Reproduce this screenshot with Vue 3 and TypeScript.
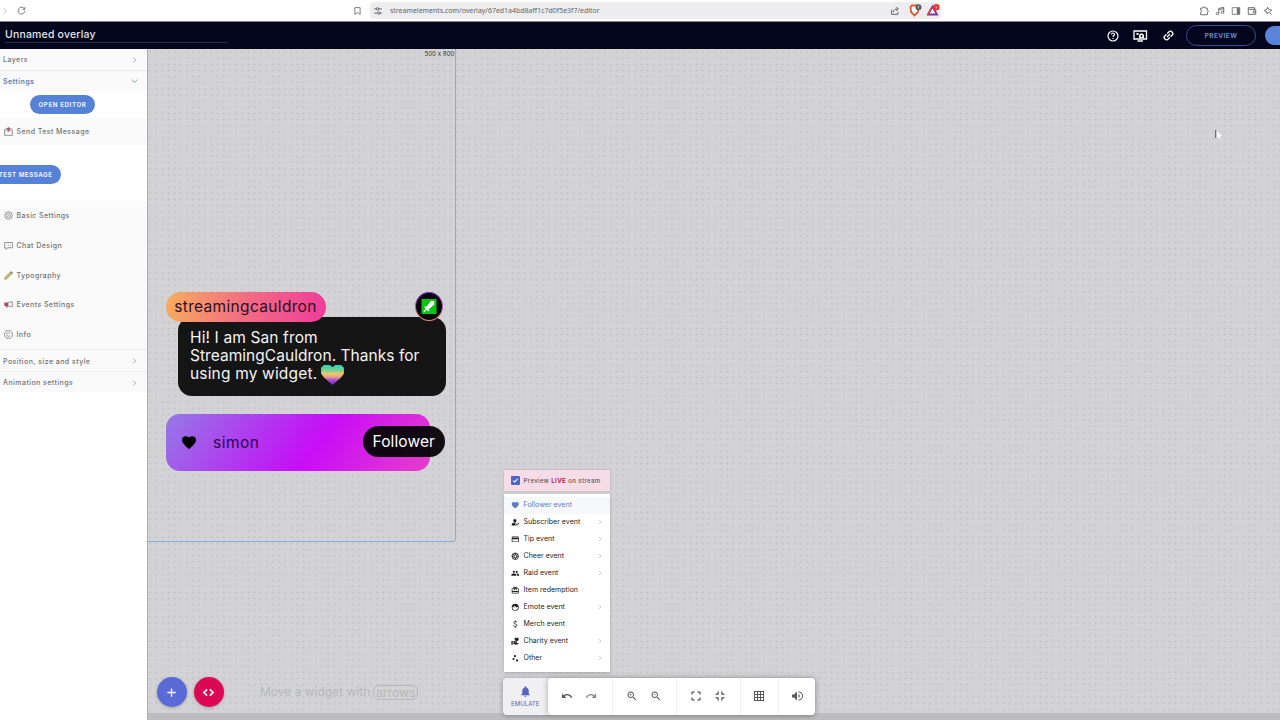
<script setup lang="ts">
import { h, type FunctionalComponent } from 'vue'

const glyphs: Record<string, string> = {
  heart: 'M12 21.4 10.6 20C5.4 15.4 2 12.300 2 8.500 2 5.400 4.400 3 7.500 3c1.700 0 3.400.8 4.500 2.100C13.100 3.800 14.800 3 16.500 3 19.600 3 22 5.400 22 8.500c0 3.800-3.400 6.900-8.600 11.500z',
  subscriber: 'M11 12a4.500 4.500 0 1 0 0-9 4.500 4.500 0 0 0 0 9zM2 21v-3c0-3 5-5 9-5 1 0 2 .1 3 .4L11 17l4 4zM17 21l-4-4 1.500-1.500L17 18l5-5 1.500 1.500z',
  card: 'M20 4H4a2 2 0 0 0-2 2v12a2 2 0 0 0 2 2h16a2 2 0 0 0 2-2V6a2 2 0 0 0-2-2zm0 14H4v-6h16zm0-10H4V6h16z',
  raid: 'M16 11a3 3 0 1 0 0-6 3 3 0 0 0 0 6zm-8 0a3 3 0 1 0 0-6 3 3 0 0 0 0 6zm0 2c-2.300 0-7 1.200-7 3.500V19h14v-2.500C15 14.200 10.300 13 8 13zm8 0-1 .1c1.200.8 2 2 2 3.400V19h6v-2.500c0-2.300-4.700-3.500-7-3.500z',
  gift: 'M20 6h-2.200A3 3 0 0 0 12 4a3 3 0 0 0-5.800 2H4a2 2 0 0 0-2 2v11a2 2 0 0 0 2 2h16a2 2 0 0 0 2-2V8a2 2 0 0 0-2-2zM9 4h1v2H8zm5 0h2v2h-2zm6 15H4v-2h16zm0-5H4V8h5l-2 3 2 1 3-4 3 4 2-1-2-3h5z',
  emote: 'M12 2a10 10 0 1 0 0 20 10 10 0 0 0 0-20zm0 18a8 8 0 0 1-8-8c3-.5 5-2 6-4 2 3 6 4 9.800 3.500A8 8 0 0 1 12 20zM9 11.800a1.300 1.300 0 1 0 0 2.600 1.300 1.300 0 0 0 0-2.600zm6 0a1.300 1.300 0 1 0 0 2.600 1.300 1.300 0 0 0 0-2.600z',
  charity: 'M1 11h4v11H1zM16 3.300C16.600 2.500 17.500 2 18.500 2 20.400 2 22 3.600 22 5.500c0 2.300-2.500 4.300-6 7.500-3.500-3.200-6-5.200-6-7.500C10 3.600 11.600 2 13.500 2c1 0 1.900.5 2.500 1.300zM20 17h-7l-2-.7.3-.9 1.700.6h3c.8 0 1.500-.7 1.500-1.500 0-.6-.4-1.100-.9-1.300L9 11H7v9l7 2 8-3c0-1.100-.9-2-2-2z',
  other: 'M7 11a3 3 0 1 0 0 6 3 3 0 0 0 0-6zM11 3a3 3 0 1 0 0 6 3 3 0 0 0 0-6zM17 15a3 3 0 1 0 0 6 3 3 0 0 0 0-6z',
  bell: 'M12 22a2 2 0 0 0 2-2h-4a2 2 0 0 0 2 2zm6-6v-5c0-3.100-1.600-5.600-4.500-6.300V4a1.500 1.500 0 0 0-3 0v.7C7.600 5.400 6 7.900 6 11v5l-2 2v1h16v-1z',
  undo: 'M12.500 8c-2.600 0-5 1-6.900 2.600L2 7v9h9l-3.600-3.600A8 8 0 0 1 20 16l2.400-.8A10.500 10.500 0 0 0 12.500 8z',
  redo: 'M18.400 10.600A10.500 10.500 0 0 0 1.600 15.200L4 16a8 8 0 0 1 12.600-3.600L13 16h9V7z',
  zoomIn: 'M15.500 14h-.8l-.3-.3A6.500 6.500 0 1 0 13.700 14.400l.3.300v.8l5 5 1.500-1.500zm-6 0a4.500 4.500 0 1 1 0-9 4.500 4.500 0 0 1 0 9zM12 10h-2v2H9v-2H7V9h2V7h1v2h2z',
  zoomOut: 'M15.500 14h-.8l-.3-.3A6.500 6.500 0 1 0 13.700 14.400l.3.300v.8l5 5 1.500-1.500zm-6 0a4.500 4.500 0 1 1 0-9 4.500 4.500 0 0 1 0 9zM7 9h5v1H7z',
  expand: 'M3 3h6v2.500H5.500V9H3zM15 3h6v6h-2.500V5.500H15zM3 15h2.500v3.500H9V21H3zM18.500 15H21v6h-6v-2.500h3.500z',
  shrink: 'M7 3h2.500v6.500H3V7h4zM14.500 3H17v4h4v2.500h-6.500zM3 14.500h6.500V21H7v-4H3zM14.500 14.500H21V17h-4v4h-2.500z',
  sound: 'M2 9v6h4l6 6V3L6 9zm13-1v8c1.500-.7 2.500-2.200 2.500-4S16.500 8.700 15 8zm0-5v2a7 7 0 0 1 0 14v2a9 9 0 0 0 0-18z',
  grid: 'M2 2h20v20H2zM4 4v4h4V4zm6 0v4h4V4zm6 0v4h4V4zM4 10v4h4v-4zm6 0v4h4v-4zm6 0v4h4v-4zM4 16v4h4v-4zm6 0v4h4v-4zm6 0v4h4v-4z',
  link: 'M3.900 12c0-1.700 1.400-3.100 3.100-3.100h4V6.500H7a5.500 5.500 0 0 0 0 11h4v-2.400H7A3.100 3.100 0 0 1 3.900 12zM8 13.200h8v-2.400H8zm9-6.700h-4v2.400h4a3.100 3.100 0 0 1 0 6.200h-4v2.400h4a5.500 5.500 0 0 0 0-11z',
}
const lines: Record<string, string> = {
  right: 'M8 4l8 8-8 8',
  down: 'M2 7l10 10L22 7',
  cheer: 'M12 3a9 9 0 1 0 0 18 9 9 0 0 0 0-18zM12 8a4 4 0 1 0 0 8 4 4 0 0 0 0-8zM12 2v6M12 16v6M2 12h6M16 12h6M5 5l4 4M15 15l4 4M19 5l-4 4M9 15l-4 4',
  dollar: 'M17 7c-1-3-9-3-9 1s9 3 9 7-8 4-10 1M12 1v4M12 19v4',
  plus: 'M12 1v22M1 12h22',
  code: 'M9 5l-7 7 7 7M15 5l7 7-7 7',
  check: 'M4 12l5 5L20 6',
  reload: 'M20 8A9 9 0 1 0 21 13M21 3v6h-6',
  bookmark: 'M5 3h14v18l-7-5-7 5z',
  tune: 'M3 7h5M14 7h7M3 17h7M17 17h4M11 4a3 3 0 1 0 0 6 3 3 0 0 0 0-6zM14 14a3 3 0 1 0 0 6 3 3 0 0 0 0-6z',
  share: 'M4 9v11h15v-6M8 15c0-6 4-8 11-8M15 2l5 5-5 5',
  puzzle: 'M4 5h5c0-4 6-4 6 0h5v5c3 0 3 5 0 5v6H4v-6c3 0 3-5 0-5z',
  music: 'M9 18V6l12-3v12M9 9l12-3M6 15a3 3 0 1 0 0 6 3 3 0 0 0 0-6zM18 12a3 3 0 1 0 0 6 3 3 0 0 0 0-6z',
  wallet: 'M3 8V4h15v4M3 8h18v12H3zM21 12h-6v4h6',
  leo: 'M11 3l3 5 7 2-5 4M11 3L9 8l-6 3 6 3 1 5 5-5M16 16l4 4',
  help: 'M12 2a10 10 0 1 0 0 20 10 10 0 0 0 0-20zM9 9c0-4 6-4 6 0 0 2-3 2-3 5M12 16v2',
  gear: 'M12 2a10 10 0 1 0 0 20 10 10 0 0 0 0-20zM12 7a5 5 0 1 0 0 10 5 5 0 0 0 0-10zM12 11v2',
  chat: 'M1 4h22v14H10l-5 4v-4H1zM6 11h2M11 11h2M16 11h2',
  copy: 'M12 1a11 11 0 1 0 0 22 11 11 0 0 0 0-22zM16 9c-3-4-9-2-9 3s6 7 9 3',
}
const Glyph: FunctionalComponent<{ name: string }> = (p) =>
  h('svg', { viewBox: '0 0 24 24', class: 'glyph' }, [
    glyphs[p.name]
      ? h('path', { d: glyphs[p.name], fill: 'currentColor', 'fill-rule': 'evenodd' })
      : h('path', { d: lines[p.name], fill: 'none', stroke: 'currentColor', 'stroke-width': p.name === 'plus' || p.name === 'code' || p.name === 'check' ? 3.6 : 2.4 }),
  ])
Glyph.props = ['name']

const groups = [
  { label: 'Basic Settings', icon: 'gear' },
  { label: 'Chat Design', icon: 'chat' },
  { label: 'Typography', icon: 'pencil' },
  { label: 'Events Settings', icon: 'horn' },
  { label: 'Info', icon: 'copy' },
]
const events = [
  { label: 'Follower event', icon: 'heart', more: false },
  { label: 'Subscriber event', icon: 'subscriber', more: true },
  { label: 'Tip event', icon: 'card', more: true },
  { label: 'Cheer event', icon: 'cheer', more: true },
  { label: 'Raid event', icon: 'raid', more: true },
  { label: 'Item redemption', icon: 'gift', more: false },
  { label: 'Emote event', icon: 'emote', more: true },
  { label: 'Merch event', icon: 'dollar', more: false },
  { label: 'Charity event', icon: 'charity', more: true },
  { label: 'Other', icon: 'other', more: true },
]
const tools = [['undo', 'redo'], ['zoomIn', 'zoomOut'], ['expand', 'shrink'], ['grid'], ['sound']]
</script>

<template>
  <div class="page">
    <div class="browser">
      <Glyph name="right" class="fwd" />
      <Glyph name="reload" class="reload" />
      <Glyph name="bookmark" class="bookmark" />
      <div class="address">
        <Glyph name="tune" />
        <span class="url">streamelements.com/overlay/67ed1a4bd8aff1c7d0f5e3f7/editor</span>
        <Glyph name="share" class="share" />
        <svg class="shield" viewBox="0 0 13 13">
          <path d="M1.500 3l1.500-1.500h5L9.500 3 9 8l-3.500 3.500L2 8z" fill="#fff" stroke="#dc5b35" stroke-width="1.800" />
          <circle cx="9.500" cy="3.200" r="3" fill="#5d5e69" /><path d="M9.500 2v2.400" stroke="#ddd" stroke-width=".8" />
        </svg>
        <svg class="bat" viewBox="0 0 13 13">
          <path d="M5.500 2.500L10 10.500H1z" fill="#fff" stroke="#7a3596" stroke-width="1.800" /><path d="M1 10.500L5 3" stroke="#d84655" stroke-width="1.800" />
          <circle cx="9.300" cy="3.300" r="3.200" fill="#e7362d" /><path d="M9.300 2v2.600" stroke="#fbb" stroke-width=".8" />
        </svg>
      </div>
      <div class="extensions">
        <Glyph name="puzzle" /><Glyph name="music" />
        <svg class="glyph" viewBox="0 0 24 24"><path d="M3 4h18v16H3z" fill="none" stroke="currentColor" stroke-width="2" /><path d="M14 4h7v16h-7z" fill="currentColor" /></svg>
        <Glyph name="wallet" /><Glyph name="leo" />
      </div>
    </div>

    <header class="topbar">
      <div class="title"><span>Unnamed overlay</span></div>
      <div class="actions">
        <Glyph name="help" class="help" />
        <svg class="monitor" viewBox="0 0 15 12"><path d="M1 1h12.500v8H1zM4.500 11h5.500" fill="none" stroke="#fff" stroke-width="1.300" /><path d="M3.500 3h2v2h-2zM6 5l1.500-1.500h2L11 5v3H6z" fill="#fff" /><circle cx="8.500" cy="6" r="1" fill="#03061c" /></svg>
        <Glyph name="link" class="link" />
        <button class="preview">PREVIEW</button>
        <div class="save"></div>
      </div>
    </header>

    <div class="body">
      <aside class="side">
        <div class="section"><span>Layers</span><Glyph name="right" /></div>
        <div class="section open"><span>Settings</span><Glyph name="down" /></div>
        <div class="editor"><button class="pill">OPEN EDITOR</button></div>
        <div class="group send">
          <svg class="emoji" viewBox="0 0 9 9"><path d="M.6 3h7.800v5.400H.6z" fill="#f8f5f5" stroke="#857f82" stroke-width=".8" /><path d="M.6 3l1.200-1.500h5.400l1.200 1.500" fill="none" stroke="#9a8f93" stroke-width=".6" /><path d="M4.500 0L6.800 2H5.500v2.500h-2V2H2.200z" fill="#ad5663" /></svg>
          <span>Send Test Message</span>
        </div>
        <div class="test"><button class="pill">TEST MESSAGE</button></div>
        <div v-for="g in groups" :key="g.label" class="group">
          <svg v-if="g.icon === 'pencil'" class="emoji" viewBox="0 0 9 9"><path d="M.5 8.500L1.200 6 6.300 1 8 2.700 3 7.700z" fill="#c8b86e" stroke="#8f895f" stroke-width=".5" /><path d="M6.300 1l.9-.8L9 1.900l-1 .8z" fill="#716d78" /></svg>
          <svg v-else-if="g.icon === 'horn'" class="emoji" viewBox="0 0 9 9"><path d="M4 2.800l4.300-1.300v5.300L4 6z" fill="#faf7f8" stroke="#8b7b80" stroke-width=".8" /><path d="M.3 2.500H4v3.600H3.600V7.500H2.200L1.800 6H.3z" fill="#a74e61" /></svg>
          <Glyph v-else :name="g.icon" class="emoji" />
          <span>{{ g.label }}</span>
        </div>
        <div class="section late"><span>Position, size and style</span><Glyph name="right" /></div>
        <div class="section late"><span>Animation settings</span><Glyph name="right" /></div>
      </aside>

      <main class="canvas">
        <div class="stage"><span>500 x 800</span></div>

        <div class="message">
          <p><span class="l1">Hi! I am San from</span><br><span class="l2">StreamingCauldron. Thanks for</span><br><span class="l3">using my widget.</span>
            <svg class="rainbow" viewBox="0 0 24 21"><defs><linearGradient id="rb" x1="0" y1="0" x2="0" y2="1"><stop offset=".05" stop-color="#35d3b4" /><stop offset=".27" stop-color="#79d292" /><stop offset=".45" stop-color="#f3c66a" /><stop offset=".6" stop-color="#ec9a87" /><stop offset=".75" stop-color="#a84fd0" /><stop offset="1" stop-color="#6a24c8" /></linearGradient></defs><path d="M3 0h6l3 2 3-2h6l3 3v6l-3 4-9 8-9-8-3-4V3z" fill="url(#rb)" /></svg>
          </p>
        </div>
        <div class="author"><span>streamingcauldron</span></div>
        <div class="badge"><svg viewBox="0 0 16 16"><path d="M0 0h16v16H0z" fill="#0ac414" /><path d="M13.500 2v4l-6 5 1 1-1 1-2-1.500L3 14l-1-1 2.500-2.500L3 8.500l1-1 1 1L10 2z" fill="#fff" /></svg></div>

        <div class="alert">
          <Glyph name="heart" /><span>simon</span>
        </div>
        <div class="follower"><span>Follower</span></div>

        <div class="fabs">
          <button class="fab add"><Glyph name="plus" /></button>
          <button class="fab dev"><Glyph name="code" /></button>
        </div>
        <div class="hint"><span class="words">Move a widget with</span><span class="key">arrows</span></div>

        <div class="live"><i><Glyph name="check" /></i><span>Preview <b>LIVE</b> on stream</span></div>
        <ul class="menu">
          <li v-for="(e, i) in events" :key="e.label" :class="{ active: i === 0 }">
            <Glyph :name="e.icon" /><span>{{ e.label }}</span><Glyph v-if="e.more" name="right" class="more" />
          </li>
        </ul>
        <div class="scrollbar"></div>
        <div class="dock">
          <div class="emulate"><Glyph name="bell" /><span>EMULATE</span></div>
          <div class="tools">
            <div v-for="(set, i) in tools" :key="i" :class="['set', 'set' + i]"><Glyph v-for="t in set" :key="t" :name="t" :class="t" /></div>
          </div>
        </div>
        <svg class="cursor" viewBox="0 0 7 11"><path d="M1 1v8l2-1.500L4.200 10l1.400-.8L4.500 7H7z" fill="#fff" /><path d="M.8 1v8" stroke="#333" stroke-width=".9" /></svg>
      </main>
    </div>
  </div>
</template>

<style>
body { margin: 0; overflow: hidden; }
</style>

<style scoped>
* { box-sizing: border-box; }
.page { width: 1280px; height: 720px; overflow: hidden; display: flex; flex-direction: column; font-family: Inter, "Liberation Sans", sans-serif; font-feature-settings: "calt" 0; background: #fff; }
.glyph { width: 10px; height: 10px; flex: none; display: block; }
span { white-space: nowrap; }
button { border: 0; padding: 0; font-family: inherit; }
.browser { height: 22px; flex: none; display: flex; align-items: center; color: #707070; background: #fff; border-bottom: 1px solid #85858c; }
.fwd { width: 8px; height: 8px; margin-left: 1px; color: #aaa; }
.reload { width: 9px; height: 9px; margin-left: 8px; }
.bookmark { width: 9px; height: 10px; margin-left: 327px; }
.address { width: 571px; height: 17px; margin-left: 8px; background: #ededf0; border-radius: 4px; display: flex; align-items: center; padding-left: 3px; color: #666; }
.url { font: 7px "Noto Sans", sans-serif; letter-spacing: -.02px; margin-left: 7px; width: 211px; }
.share { margin-left: 289px; }
.shield { width: 13px; height: 13px; margin-left: 9px; margin-top: -1px; }
.bat { width: 13px; height: 13px; margin-left: 5px; margin-top: -1px; }
.extensions { display: flex; gap: 6px; margin-left: auto; margin-right: 7px; }
.topbar { height: 27px; flex: none; background: #03061c; display: flex; justify-content: space-between; color: #fff; }
.title { width: 223px; height: 21px; margin-left: 5px; border-bottom: 1px solid #292e44; font-size: 10.500px; line-height: 25px; color: #e3e5ec; font-weight: 500; }
.title span { letter-spacing: .18px; }
.actions { display: flex; align-items: center; }
.help { width: 12px; height: 12px; }
.monitor { width: 15px; height: 12px; margin-left: 14px; }
.link { width: 13px; height: 13px; margin-left: 14px; transform: rotate(-45deg); }
.preview { width: 70px; height: 21px; margin-left: 11px; border: 1px solid #3c4f8b; border-radius: 11px; background: transparent; color: #6487d2; font-size: 6.500px; font-weight: 700; letter-spacing: .4px; }
.save { width: 15px; height: 19px; margin-left: 9px; background: #5884da; border-radius: 10px 0 0 10px; }
.body { flex: 1; display: flex; min-height: 0; }
.side { width: 147.500px; flex: none; background: #fff; border-right: 1px solid #aaaab0; overflow: hidden; font-size: 7px; color: #747474; font-weight: 500; }
.section { height: 21.500px; background: #fafafa; border-bottom: 1px solid #ececec; display: flex; align-items: center; justify-content: space-between; padding: 1px 9px 0 3px; }
.section span { letter-spacing: .45px; }
.section .glyph { width: 7px; height: 8px; color: #888; }
.section.open { color: #5c7eb6; border-bottom: 0; height: 20.500px; font-weight: 600; }
.section.open .glyph { color: #57769f; }
.section.late { border-top: 1px solid #f2f2f2; border-bottom: 0; }
.editor { height: 27px; padding: 4px 0 0 30px; }
.pill { display: block; height: 19px; border-radius: 10px; background: #5582d6; color: #e9f0ff; font-size: 6.200px; font-weight: 700; letter-spacing: .6px; white-space: nowrap; }
.editor .pill { width: 65px; }
.test { height: 56px; padding-top: 20px; }
.test .pill { width: 81px; margin-left: -20px; text-align: right; padding-right: 8.500px; letter-spacing: .5px; }
.group { height: 29.700px; background: #fafafa; display: flex; align-items: center; gap: 4px; padding-left: 3.500px; }
.send { height: 27px; }
.emoji { width: 9px; height: 9px; color: #888; flex: none; }
.group span { letter-spacing: .43px; }
.canvas { flex: 1; position: relative; overflow: hidden; background-color: #d3d3d5; background-image: radial-gradient(circle, #b7b7bf .55px, transparent 1px); background-size: 6.150px 6.150px; background-position: -1px 0; }
.stage { position: absolute; left: -4px; top: -4px; width: 312px; height: 497px; border: 1px solid #86aedb; border-radius: 0 0 3px 0; text-align: right; font-size: 6.200px; line-height: 16px; color: #333; }
.author { position: absolute; left: 18px; top: 242.500px; width: 160px; height: 30px; border-radius: 15px; background: linear-gradient(100deg, #f6ae5c, #f36b83 50%, #ef3c9b); font-size: 15.500px; line-height: 30px; color: #2c1020; text-align: center; letter-spacing: .33px; }
.message { position: absolute; left: 30px; top: 267.500px; width: 268px; height: 79px; border-radius: 14px; background: #151515; color: #f4f4f4; }
.message p { margin: 12px 0 0 12.500px; font-size: 15.500px; line-height: 18.300px; white-space: nowrap; }
.l1 { letter-spacing: .13px; }
.l2 { letter-spacing: .04px; }
.l3 { letter-spacing: .17px; }
.rainbow { width: 23px; height: 20px; vertical-align: -6px; margin: -3px 0 0 4px; }
.badge { position: absolute; left: 267px; top: 243px; width: 28px; height: 29px; border-radius: 50%; border: 1.500px solid transparent; background: linear-gradient(#0a050c, #0a050c) padding-box, linear-gradient(#6b22c8, #ed8b72) border-box; display: grid; place-items: center; }
.badge svg { width: 16px; height: 15px; }
.alert { position: absolute; left: 18px; top: 365px; width: 264px; height: 57px; border-radius: 14px; background: linear-gradient(125deg, #947ae6, #be1df4 48%, #c90df7 57%, #e73ecb); display: flex; align-items: center; color: #000; font-size: 15.500px; }
.alert .glyph { width: 18px; height: 17px; margin-left: 14px; }
.alert span { margin: -1px 0 0 15.500px; color: #30064c; letter-spacing: .5px; }
.follower { position: absolute; left: 215px; top: 377px; width: 82.500px; height: 31px; border-radius: 16px; background: rgba(8, 4, 10, .96); color: #fff; font-size: 15.500px; line-height: 31px; text-align: center; letter-spacing: .1px; }
.fabs { position: absolute; left: 9px; top: 628px; display: flex; gap: 7px; }
.fab { width: 30px; height: 30px; border-radius: 50%; background: #5a6bd8; color: #fff; display: grid; place-items: center; box-shadow: 0 1px 3px #7778; }
.dev { background: #dd0753; }
.fab .glyph { width: 9px; height: 9px; }
.dev .glyph { width: 11px; height: 11px; }
.hint { position: absolute; left: 112.500px; top: 635.500px; display: flex; align-items: center; gap: 3px; font-size: 12px; line-height: 14px; color: #b8b8ba; }
.key { border: 1px solid #b8b8ba; border-radius: 6px; padding: 0 2px; height: 15px; line-height: 13px; }
.live { position: absolute; left: 356px; top: 421px; width: 106px; height: 21px; background: #f6dce7; box-shadow: 0 0 2px #aaa; display: flex; align-items: center; font-size: 6px; color: #555; font-weight: 500; padding: 0 0 1px 7px; letter-spacing: .42px; }
.live i { width: 9px; height: 9px; margin-right: 4px; background: #5065c8; color: #fff; border-radius: 1px; display: grid; place-items: center; }
.live .glyph { width: 7px; height: 7px; }
.live b { color: #c1154f; }
.menu { position: absolute; left: 356px; top: 445px; width: 106px; height: 178px; margin: 0; padding: 2.500px 0; background: #fff; list-style: none; box-shadow: 0 1px 3px #8888; font-size: 7px; color: #222; }
.menu li { height: 17px; display: flex; align-items: center; padding: 0 7px 0 7.500px; }
.menu li .glyph { width: 8.500px; height: 8.500px; }
.menu li span { margin: -1px 0 0 4px; letter-spacing: .03px; }
.menu li .more { width: 6px; height: 6px; margin-left: auto; color: #aaa; }
.menu .active { color: #5a7ec3; background: #f7f8f9; }
.scrollbar { position: absolute; left: 0; right: 0; bottom: 0; height: 7px; background: #bdbdbf; }
.dock { position: absolute; left: 355.500px; top: 629px; height: 37px; width: 311.500px; display: flex; background: #f0f0f2; border-radius: 4px; box-shadow: 0 1px 5px #6669; }
.emulate { width: 44.500px; display: flex; flex-direction: column; align-items: center; padding-top: 6.500px; color: #5865bf; font-size: 6.100px; }
.emulate .glyph { width: 13px; height: 13px; margin-bottom: 2px; }
.tools { flex: 1; display: flex; background: #fff; border-radius: 4px; box-shadow: -1px 0 5px #7777; color: #585858; }
.set { display: flex; align-items: center; justify-content: center; gap: 12px; width: 64px; border-left: 1px solid #f0f0f1; padding: 0 1px 1px 0; }
.set .glyph { width: 12px; height: 12px; }
.set .redo { color: #888; }
.set0 { border: 0; }
.set3 { width: 38px; }
.set4 { width: 37px; padding: 0 0 1px 1px; }
.cursor { position: absolute; left: 1067px; top: 80px; width: 7px; height: 11px; }
</style>
